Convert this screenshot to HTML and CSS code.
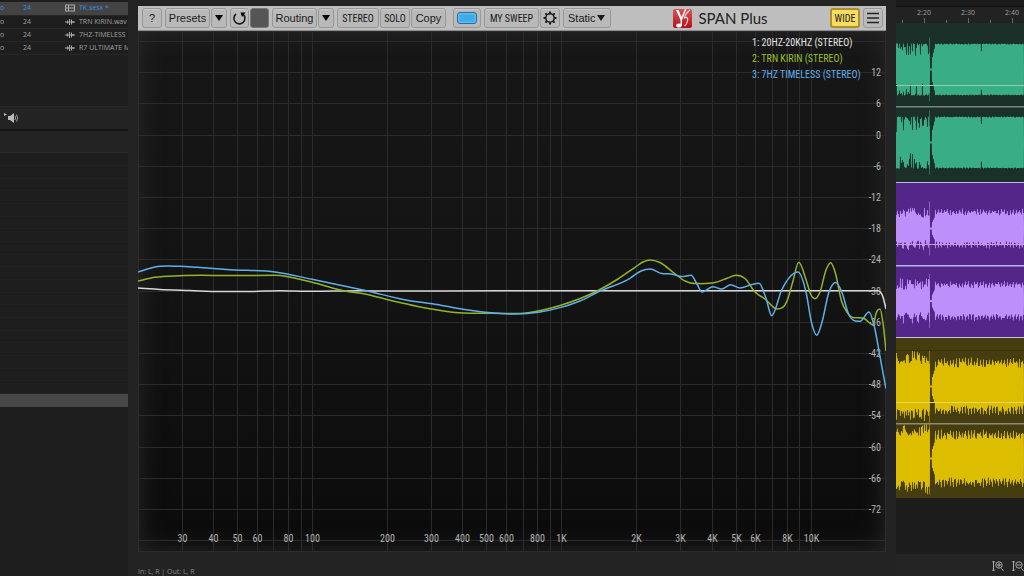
FILE: index.html
```html
<!DOCTYPE html>
<html lang="en">
<head>
<meta charset="utf-8"/>
<title>SPAN Plus</title>
<link rel="stylesheet" href="styles.css">
</head>
<body>
  <div class="app">

    <div class="files">
      <table class="file-table">
        <tr class="active">
          <td class="mode">o</td><td class="bits">24</td>
          <td class="kind"><svg width="10" height="8" viewBox="0 0 10 8"><path d="M0 1h10M0 4h10M0 7h10M.5 1v6M3.500 1v6M9.500 1v6" stroke="#aaa"/></svg></td>
          <td class="name">TK.sesx *</td>
        </tr>
        <tr>
          <td class="mode">o</td><td class="bits">24</td>
          <td class="kind"><svg width="10" height="8" viewBox="0 0 10 8"><path d="M0 4h10M2.5 2.5v3M4.5 1v6M6.5 1.500v5M8 3v2" stroke="#aaa"/></svg></td>
          <td class="name">TRN KIRIN.wav</td>
        </tr>
        <tr>
          <td class="mode">o</td><td class="bits">24</td>
          <td class="kind"><svg width="10" height="8" viewBox="0 0 10 8"><path d="M0 4h10M2.5 2.5v3M4.5 1v6M6.5 1.500v5M8 3v2" stroke="#aaa"/></svg></td>
          <td class="name">7HZ-TIMELESS</td>
        </tr>
        <tr>
          <td class="mode">o</td><td class="bits">24</td>
          <td class="kind"><svg width="10" height="8" viewBox="0 0 10 8"><path d="M0 4h10M2.5 2.5v3M4.5 1v6M6.5 1.500v5M8 3v2" stroke="#aaa"/></svg></td>
          <td class="name">R7 ULTIMATE M</td>
        </tr>
      </table>
      <div class="preview">
        <svg width="15" height="12" viewBox="0 0 15 12"><path d="M0 1l3 1.500-3 1.500z" fill="#bbb"/><path d="M4 4h2l4-3v10L6 8H4z" fill="#bbb"/><path d="M11 4q1.500 2 0 4M12.500 2.500q2.500 3.500 0 7" fill="none" stroke="#999"/></svg>
      </div>
      <div class="panel-head"></div>
      <div class="rows" id="rows"></div>
      <div class="row-selected"></div>
    </div>

    <div class="plugin">
      <div class="toolbar">
        <button class="btn w20">?</button>
        <div class="group">
          <button class="btn w45">Presets</button>
          <button class="btn w16" aria-label="Presets list"><svg width="10" height="6" viewBox="0 0 10 6"><path d="M1 0h8L5 6z"/></svg></button>
        </div>
        <div class="group">
          <button class="btn w19" aria-label="Undo"><svg width="15" height="15" viewBox="0 0 15 15"><path d="M4 3A5.500 5.500 0 1 0 11 3.200" fill="none" stroke="#1a1a1a" stroke-width="1.600"/><path d="M8.500 1.500h5L10 6z"/></svg></button>
          <button class="btn w19 dark" aria-label="Redo"></button>
        </div>
        <div class="group">
          <button class="btn w45">Routing</button>
          <button class="btn w16" aria-label="Routing list"><svg width="10" height="6" viewBox="0 0 10 6"><path d="M1 0h8L5 6z"/></svg></button>
        </div>
        <div class="group">
          <button class="btn w42 caps">STEREO</button>
          <button class="btn w30 caps">SOLO</button>
          <button class="btn w35">Copy</button>
        </div>
        <button class="btn w28 led" aria-label="Channel color"><span></span></button>
        <div class="group">
          <button class="btn w55 caps">MY SWEEP</button>
          <button class="btn w20" aria-label="Settings"><svg width="14" height="14" viewBox="0 0 14 14"><circle cx="7" cy="7" r="4.200" fill="none" stroke="#1a1a1a" stroke-width="1.500"/><path d="M7 .5v2M7 11.500v2M.5 7h2M11.500 7h2M2.400 2.400l1.400 1.400M10.200 10.200l1.400 1.400M2.400 11.600l1.400-1.400M10.200 3.800l1.400-1.400" stroke="#1a1a1a" stroke-width="2"/></svg></button>
        </div>
        <select class="btn w48" aria-label="Mode"><option>Static</option></select>
        <div class="brand">
          <svg width="19" height="19" viewBox="0 0 19 19">
            <defs><linearGradient id="red" x2="0" y2="1"><stop offset="0" stop-color="#d85555"/><stop offset="1" stop-color="#b5101c"/></linearGradient></defs>
            <rect width="19" height="19" rx="2" fill="url(#red)"/>
            <path d="M3 1h2.500l3 7L12 0h1.500L9 11v5H7.500v-5z" fill="#fff"/>
            <path d="M17 1q-5 4-5.500 8 4-2 3 3-.5 3-3 5" fill="none" stroke="#f6dcdc" stroke-width="1.200"/>
            <ellipse cx="6" cy="16.500" rx="2.800" ry="2" fill="#fff"/>
          </svg>
          <span>SPAN Plus</span>
        </div>
        <button class="btn w30 caps wide">WIDE</button>
        <button class="btn w20" aria-label="Menu"><svg width="14" height="12" viewBox="0 0 14 12"><path d="M1 1.500h12M1 6h12M1 10.500h12" stroke="#222" stroke-width="1.500"/></svg></button>
      </div>
      <svg class="chart" id="chart" viewBox="0 0 748 521">
        <g id="grid"></g>
        <g id="labels"></g>
        <g id="curves"></g>
        <g class="legend">
          <text x="614" y="15" fill="#e4e4e4">1: 20HZ-20KHZ (STEREO)</text>
          <text x="614" y="31" fill="#9cc02c">2: TRN KIRIN (STEREO)</text>
          <text x="614" y="47" fill="#62aee6">3: 7HZ TIMELESS (STEREO)</text>
        </g>
      </svg>
      <div class="status">In: L, R | Out: L, R</div>
    </div>

    <div class="tracks">
      <div class="ruler"><span>2:20</span><span>2:30</span><span>2:40</span></div>
      <svg class="clip green" id="clip1" viewBox="0 0 128 159"></svg>
      <svg class="clip purple" id="clip2" viewBox="0 0 128 156"></svg>
      <svg class="clip yellow" id="clip3" viewBox="0 0 128 160"></svg>
      <div class="zoombar">
        <svg width="12" height="12" viewBox="0 0 12 12"><path d="M1.500 1v10M0 2.500L1.500 1 3 2.500M0 9.500L1.500 11 3 9.500M9.500 8.500l2 2.500M5 5h4M7 3v4" /><circle cx="7" cy="5" r="3.200"/></svg>
        <svg width="12" height="12" viewBox="0 0 12 12"><path d="M1.500 1v10M0 2.500L1.500 1 3 2.500M0 9.500L1.500 11 3 9.500M9.500 8.500l2 2.500M5 5h4" /><circle cx="7" cy="5" r="3.200"/></svg>
      </div>
    </div>

  </div>
  <script src="script.js"></script>
</body>
</html>
```
FILE: styles.css
```css
*{
  box-sizing:border-box;
}
body{
  margin:0;
  background:#1e1e1e;
  color:#a0a0a0;
  font-family:"Open Sans","Noto Sans",sans-serif;
  font-size:7px;
}
svg{
  display:block;
}
.app{
  display:grid;
  grid-template-columns:128px minmax(0,1fr) 128px;
  min-height:100vh;
  overflow:hidden;
}

/* file list */
.files{
  overflow:hidden;
  padding-top:2px;
  background:#1e1e1e;
}
.file-table{
  table-layout:fixed;
  width:100%;
  border-collapse:collapse;
}
.file-table td{
  height:13px;
  padding:0;
  line-height:12px;
  white-space:nowrap;
  overflow:hidden;
  border-bottom:1px solid #272727;
}
.file-table .active td{
  background:#434343;
  color:#3a8ee0;
}
.mode{
  width:23px;
}
.bits{
  width:42px;
}
.kind{
  width:14px;
}
.preview{
  display:flex;
  align-items:center;
  height:23px;
  margin-top:51px;
  padding-left:4px;
  background:#232323;
  border-top:1px solid #292929;
}
.panel-head{
  height:24px;
  background:#232323;
  border-top:2px solid #151515;
  border-bottom:1px solid #2a2a2a;
}
.rows div{
  height:13px;
  border-bottom:1px solid #222;
}
.rows div:nth-child(3n){
  height:12px;
}
.row-selected{
  height:13px;
  background:#474747;
}

/* plugin window */
.plugin{
  display:flex;
  flex-direction:column;
  padding:6px 10px 0;
  background:#232323;
}
.toolbar{
  display:flex;
  align-items:center;
  gap:3px;
  height:25px;
  padding:0 3px 0 4px;
  background:#bebebe;
  border-bottom:1px solid #8a8a8a;
}
.group{
  display:flex;
  gap:1px;
}
.btn{
  display:flex;
  align-items:center;
  justify-content:center;
  flex:none;
  height:20px;
  padding:0;
  border:1px solid #989898;
  border-radius:3px;
  background:#b9b9b9;
  box-shadow:inset 0 1px 0 #cacaca;
  color:#1a1a1a;
  font:11px "Liberation Sans",Arial,sans-serif;
  white-space:nowrap;
}
.caps{
  font:10px "Roboto Condensed","Liberation Sans Narrow",Roboto,sans-serif;
}
.w16{
  width:16px;
}
.w19{
  width:19px;
}
.w20{
  width:20px;
}
.w28{
  width:28px;
  margin:0 0 0 4px;
}
.w30{
  width:30px;
}
.w35{
  width:35px;
}
.w42{
  width:42px;
}
.w45{
  width:45px;
}
.w48{
  width:48px;
}
.w55{
  width:55px;
}
.dark{
  background:#555;
  box-shadow:none;
  border-color:#777;
}
.led span{
  width:20px;
  height:12px;
  border:1px solid #2b6c99;
  border-radius:3px;
  background:#41aae8;
  box-shadow:inset 0 0 2px 1px #6cc4f6;
}
select.btn{
  appearance:none;
  padding-left:4px;
  background:#b9b9b9 url("data:image/svg+xml,%3Csvg xmlns='http://www.w3.org/2000/svg' width='8' height='6'%3E%3Cpath d='M0 0h8L4 6z' fill='%231a1a1a'/%3E%3C/svg%3E") no-repeat right 5px center;
}
.brand{
  display:flex;
  align-items:center;
  gap:6px;
  margin:0 auto;
  color:#222;
  font:15px Lato,sans-serif;
}
.wide{
  background:#f5dc62;
  border:2px solid #b08f28;
  box-shadow:none;
}
.chart{
  width:100%;
  background:linear-gradient(#171717,#131313 50%,#0b0b0b);
  box-shadow:inset 0 0 26px #2a2a2a;
}
.chart text{
  font:10px "Roboto Condensed","Liberation Sans Narrow",Roboto,sans-serif;
}
.grid-line{
  stroke:#2b2b2b;
  stroke-width:1;
}
.hz{
  fill:#b4b4b4;
  text-anchor:middle;
}
.db{
  fill:#b4b4b4;
  text-anchor:end;
}
.curve{
  fill:none;
  stroke-width:1.500;
}
.status{
  margin-top:14px;
  line-height:12px;
  color:#888;
}

/* tracks */
.tracks{
  display:flex;
  flex-direction:column;
  background:#1c1c1c;
  overflow:hidden;
}
.ruler{
  display:flex;
  height:23px;
  padding-left:6px;
  border-top:6px solid #1b1b1b;
  background:#222;
  box-shadow:inset 0 1px 0 #111;
}
.ruler span{
  flex:none;
  width:44px;
  height:17px;
  line-height:14px;
  text-align:center;
  background:linear-gradient(#666,#666) 0 100%/1px 3px no-repeat,linear-gradient(#666,#666) 50% 100%/1px 5px no-repeat;
}
.clip{
  width:100%;
}
.green{
  background:#1c302a;
}
.purple{
  background:#54268a;
}
.yellow{
  background:#453d10;
}
.zoombar{
  display:flex;
  gap:8px;
  align-items:center;
  height:24px;
  margin-top:auto;
  padding-left:96px;
  background:#242424;
}
.zoombar svg{
  flex:none;
  fill:none;
  stroke:#aaa;
}
```
FILE: script.js
```js
var NS = "http://www.w3.org/2000/svg";
function add(parent, tag, attrs, text){
  var el = document.createElementNS(NS, tag);
  for(var k in attrs) el.setAttribute(k, attrs[k]);
  if(text) el.textContent = text;
  parent.appendChild(el);
}

var rows = document.getElementById("rows");
for(var i = 0; i < 19; i++) rows.appendChild(document.createElement("div"));

// frequency grid, 20 Hz - 20 kHz, logarithmic
var grid = document.getElementById("grid");
var labels = document.getElementById("labels");
function hzX(f){
  return Math.round(174 + 249.4 * (Math.log10(f) - 2)) + 0.5;
}
for(var dec = 10; dec <= 10000; dec *= 10){
  for(var n = 1; n < 10; n++){
    var f = dec * n;
    if(f < 20 || f > 10000) continue;
    add(grid, "line", {x1: hzX(f), x2: hzX(f), y1: 0, y2: 521, "class": "grid-line"});
    if(f == 20 || n == 7 || n == 9) continue;
    add(labels, "text", {x: hzX(f), y: 511, "class": "hz"}, f >= 1000 ? f / 1000 + "K" : f);
  }
}
for(var db = 18; db >= -78; db -= 6){
  var y = Math.round(10 + (18 - db) * 5.2) + 0.5;
  add(grid, "line", {x1: 0, x2: 748, y1: y, y2: y, "class": "grid-line"});
  if(db < 18 && db > -78) add(labels, "text", {x: 743, y: y + 3, "class": "db"}, String(db));
}
add(grid, "rect", {x: 0.5, y: 0.5, width: 747, height: 520, fill: "none", "class": "grid-line"});

// smooth curve through the points, flat at peaks and dips
function curve(points, color){
  var m = [], d = [], w = [], i;
  for(i = 0; i < points.length - 1; i++){
    w.push(points[i+1][0] - points[i][0]);
    d.push((points[i+1][1] - points[i][1]) / w[i]);
  }
  m.push(d[0]);
  for(i = 1; i < d.length; i++)
    m.push(d[i-1] * d[i] <= 0 ? 0 : (d[i-1] * w[i] + d[i] * w[i-1]) / (w[i] + w[i-1]));
  m.push(d[d.length-1]);
  var p = "M" + (points[0][0] - 138) + " " + (points[0][1] - 31);
  for(i = 1; i < points.length; i++){
    var a = points[i-1], b = points[i], h = (b[0] - a[0]) / 3;
    p += "C" + [a[0]+h-138, a[1]+m[i-1]*h-31, b[0]-h-138, b[1]-m[i]*h-31, b[0]-138, b[1]-31].join(" ");
  }
  add(document.getElementById("curves"), "path", {d: p, stroke: color, "class": "curve"});
}
curve([[138,288],[160,289.5],[190,290.5],[220,291.5],[250,291.5],[280,290.7],[310,291.3],[360,290.8],[390,291],[500,290.8],[878,290.8],[883,297],[886,309]], "#d8d8d8");
curve([[138,281],[155,277.3],[180,275.7],[230,275.5],[275,275.3],[312,282.3],[345,291],[365,294],[387,299.5],[431,309],[455,312.5],[490,313.2],[520,313.5],[545,309.5],[560,305.5],[598,290.5],[618,279],[635,267.3],[643,262],[650,260],[660,262.5],[674,273],[685,281],[696,283.6],[715,282.5],[727,278.3],[736,275.3],[745,278.5],[755,292],[765,299],[777,309],[787,301],[793,281],[798.7,262.3],[806.7,281.7],[811,295],[815,298.7],[820,292],[826,270],[830.7,262.7],[835,271.7],[841.7,301.7],[847,312.3],[865,319],[872.7,324.7],[876.7,311.7],[880,309],[883,323],[886,351]], "#93b32a");
curve([[138,272],[155,267],[180,266.3],[197,267.3],[230,269.7],[275,272],[312,279.3],[363,290],[413,301.3],[432,303.7],[463,309.3],[485,312.3],[515,314],[540,312],[560,307.6],[580,301],[598,292],[630,278.3],[641,271],[650,269],[661.7,273.5],[671.7,274],[682,276.6],[691,275.3],[697,284],[702,292],[712.7,286.7],[721.7,289],[730.7,284.7],[740,288],[751.7,284.5],[759,283.3],[766,298.3],[771.7,315.7],[781.7,290],[798,272],[806,292],[811.7,323.3],[816.7,335.3],[821.7,323.3],[829,292],[835.7,282.5],[841.7,291.7],[848.3,313.3],[860,321.3],[869,312],[874,325],[880,356.7],[886,388.7]], "#5fb0e8");

// waveforms
var seed = 7;
function rnd(){
  seed = (seed * 16807) % 2147483647;
  return seed / 2147483647;
}
function level(x, o){
  if(x < 34) return o.leftMax - (o.leftMax - o.left) * Math.pow(rnd(), o.solid ? 4 : 0.7);
  if(x < 36) return 1;
  if(x < 39) return o.core * (x - 33) / 6;
  if(o.solid && x == 85) return o.max - 4 - rnd() * 5;
  return o.core + (o.max - o.core) * (x % 3 < 1 ? 0.6 + rnd() * 0.4 : rnd() * 0.6);
}
function wave(svg, mid, o, color){
  var top = "M0 " + mid, bottom = "";
  for(var x = 0; x < 128; x++){
    var t = mid - level(x, o), b = mid + level(x, o);
    top += "L" + x + " " + t + "L" + (x + 0.8) + " " + t;
    bottom = "L" + (x + 0.8) + " " + b + "L" + x + " " + b + bottom;
  }
  add(svg, "path", {d: top + "L128 " + mid + bottom + "Z", fill: color});
  add(svg, "rect", {x: 33, y: mid - o.spike, width: 1, height: o.spike * 2, fill: color, opacity: 0.5});
}
function rule(svg, y, color, h){
  add(svg, "rect", {x: 0, y: y, width: 128, height: h || 1, fill: color});
}
var g = document.getElementById("clip1");
var go = {left: 10, leftMax: 26, core: 25, max: 26, spike: 32, solid: true};
wave(g, 46.5, go, "#39ad85");
wave(g, 119.5, go, "#39ad85");
rule(g, 62, "#8fd0a8");
rule(g, 83, "#71877f", 1.5);

var p = document.getElementById("clip2");
var po = {left: 11, leftMax: 23, core: 13, max: 20, spike: 27};
wave(p, 46.5, po, "#bd8ffa");
wave(p, 119, po, "#bd8ffa");
rule(p, 0, "#c5b5d5");
rule(p, 62, "#d59bcf");
rule(p, 83, "#b5b5f0", 1.5);
rule(p, 155, "#d0c4d4");

var w = document.getElementById("clip3");
var wo = {left: 22, leftMax: 36, core: 19, max: 29, spike: 36};
wave(w, 48.5, wo, "#dcbd00");
wave(w, 120.5, wo, "#dcbd00");
rule(w, 12, "#383208");
rule(w, 64, "#e9d75c");
rule(w, 85, "#8f8b70", 1.5);
```
